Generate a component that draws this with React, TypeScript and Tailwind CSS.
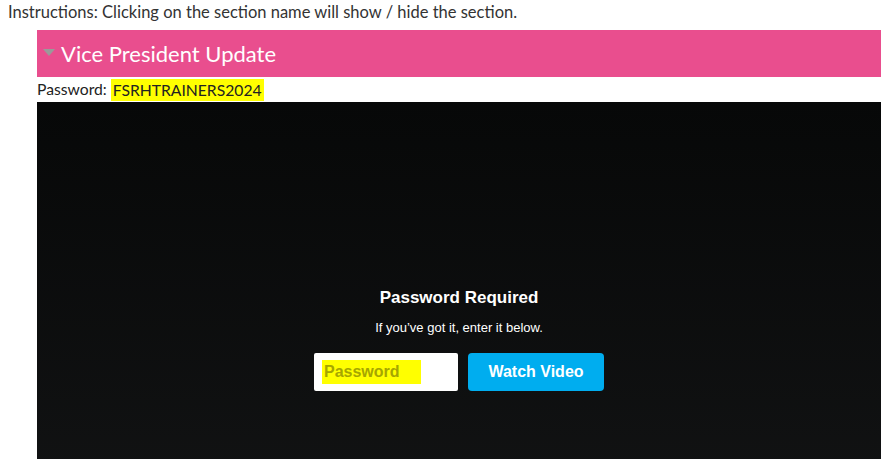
export default function App() {
  return (
    <main className="min-h-screen bg-white" style={{ fontFamily: "Lato, 'Open Sans', sans-serif" }}>
      <p className="pl-2 pt-[2px] text-[16.5px] leading-[21px] text-[#333]">
        Instructions: Clicking on the section name will show / hide the section.
      </p>

      <section className="ml-[37px] mr-2 mt-[7px]">
        <div className="flex h-[47px] items-center bg-[#e94e8e] pl-[6px]">
          <svg width="12" height="8" viewBox="0 0 12 8" className="mr-[6px] mt-[-2px]">
            <polygon points="0,0 12,0 6,7" fill="#9a9a9a" />
          </svg>
          <h2 className="text-[22px] font-normal text-white">Vice President Update</h2>
        </div>

        <div className="flex h-[25px] items-center text-[15.7px] text-[#222]">
          <span>Password:&nbsp;</span>
          <span className="bg-[#ffff00] px-[2px] leading-[22px]">FSRHTRAINERS2024</span>
        </div>

        <div className="flex h-[475px] flex-col items-center justify-center bg-gradient-to-b from-[#070808] to-[#141516] pb-[1px]"
          style={{ fontFamily: "'Liberation Sans', Arial, sans-serif" }}>
          <h3 className="text-[17px] font-bold leading-[20px] text-white">Password Required</h3>
          <p className="mt-[12px] text-[13px] leading-[16px] text-white">If you’ve got it, enter it below.</p>
          <div className="mt-[17px] flex gap-[10px]">
            <div className="flex h-[38px] w-[144px] items-center rounded-[2px] bg-white pl-[8px]">
              <span className="flex h-[24px] w-[99px] items-center bg-[#ffff00] pl-[2px] text-[16px] font-bold text-[#a6a600]">
                Password
              </span>
            </div>
            <button className="h-[38px] w-[136px] rounded-[4px] bg-[#00adef] text-[16px] font-bold text-white">
              Watch Video
            </button>
          </div>
        </div>
      </section>
    </main>
  )
}
